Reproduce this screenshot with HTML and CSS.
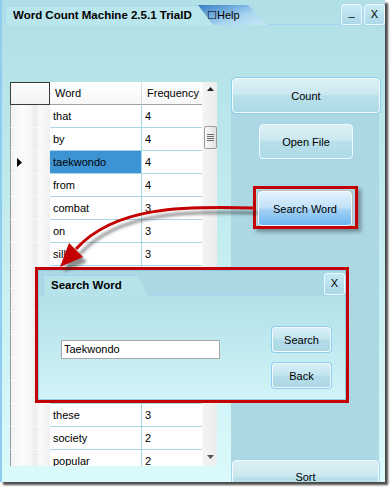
FILE: index.html
```html
<!DOCTYPE html>
<html>
<head>
<meta charset="utf-8">
<link rel="stylesheet" href="styles.css">
</head>
<body>
<div class="window">
  <div class="titlebar">
    <div class="tab-title"><span class="title-text">Word Count Machine 2.5.1 TrialD</span></div>
    <div class="tab-help">&#9744;Help</div>
    <div class="title-line"></div>
    <div class="win-btns">
      <div class="wbtn min">_</div>
      <div class="wbtn">X</div>
    </div>
  </div>
  <div class="main">
    <div class="grid">
      <div class="table">
        <div class="row head"><div class="rh corner"></div><div class="c w">Word</div><div class="c f">Frequency</div></div>
        <div class="row"><div class="rh"></div><div class="c w">that</div><div class="c f">4</div></div>
        <div class="row"><div class="rh"></div><div class="c w">by</div><div class="c f">4</div></div>
        <div class="row"><div class="rh"><svg class="ind" width="5" height="9" viewBox="0 0 5 9"><path d="M0 0 L5 4.5 L0 9 Z" fill="#000"/></svg></div><div class="c w sel">taekwondo</div><div class="c f">4</div></div>
        <div class="row"><div class="rh"></div><div class="c w">from</div><div class="c f">4</div></div>
        <div class="row"><div class="rh"></div><div class="c w">combat</div><div class="c f">3</div></div>
        <div class="row"><div class="rh"></div><div class="c w">on</div><div class="c f">3</div></div>
        <div class="row"><div class="rh"></div><div class="c w">silla</div><div class="c f">3</div></div>
        <div class="row"><div class="rh"></div><div class="c w"></div><div class="c f"></div></div>
        <div class="row"><div class="rh"></div><div class="c w"></div><div class="c f"></div></div>
        <div class="row"><div class="rh"></div><div class="c w"></div><div class="c f"></div></div>
        <div class="row"><div class="rh"></div><div class="c w"></div><div class="c f"></div></div>
        <div class="row"><div class="rh"></div><div class="c w"></div><div class="c f"></div></div>
        <div class="row"><div class="rh"></div><div class="c w"></div><div class="c f"></div></div>
        <div class="row"><div class="rh"></div><div class="c w">these</div><div class="c f">3</div></div>
        <div class="row"><div class="rh"></div><div class="c w">society</div><div class="c f">2</div></div>
        <div class="row"><div class="rh"></div><div class="c w">popular</div><div class="c f">2</div></div>
      </div>
      <div class="vscroll">
        <svg class="sarrow" width="7" height="4" viewBox="0 0 7 4"><path d="M0 4 L3.5 0 L7 4 Z" fill="#222"/></svg>
        <div class="thumb"><i></i><i></i><i></i><i></i></div>
        <svg class="sarrow down" width="7" height="4" viewBox="0 0 7 4"><path d="M0 0 L3.5 4 L7 0 Z" fill="#555"/></svg>
      </div>
    </div>
    <div class="panel">
      <div class="btn count">Count</div>
      <div class="btn open">Open File</div>
      <div class="btn search-word">Search Word</div>
      <div class="btn sort">Sort</div>
    </div>
  </div>
</div>

<div class="dialog">
  <div class="dlg-inner">
    <div class="dlg-bar">
      <div class="dlg-tab">Search Word</div>
      <div class="dlg-line"></div>
      <div class="dlg-x">X</div>
    </div>
    <div class="dlg-body">
      <div class="input">Taekwondo</div>
      <div class="dlg-btns">
        <div class="dbtn">Search</div>
        <div class="dbtn">Back</div>
      </div>
    </div>
  </div>
</div>

<svg class="arrow" width="391" height="487" viewBox="0 0 391 487">
  <defs>
    <filter id="blur" x="-20%" y="-20%" width="140%" height="140%">
      <feGaussianBlur stdDeviation="1.6"/>
    </filter>
  </defs>
  <g transform="translate(4,5)" filter="url(#blur)" opacity="0.55">
    <path d="M253 208 C 185 206, 115 206, 76 249" fill="none" stroke="#333" stroke-width="3"/>
    <path d="M60 267 L69 243 L83 257 Z" fill="#333"/>
  </g>
  <path d="M253 208 C 185 206, 115 206, 76 249" fill="none" stroke="#c40000" stroke-width="3"/>
  <path d="M60 267 L69 243 L83 257 Z" fill="#c40000"/>
</svg>
</body>
</html>
```
FILE: styles.css
```css
* { box-sizing: border-box; margin: 0; padding: 0; }
html, body { width: 391px; height: 487px; background: #fff; overflow: hidden; }
body { font-family: "Liberation Sans", Arial, sans-serif; font-size: 11px; color: #000; position: relative; }

.window {
  width: 385px; height: 482px; overflow: hidden;
  display: flex; flex-direction: column;
  background: linear-gradient(#b0e0e6 0%, #b3e3e8 12%, #c6eef1 55%, #dafafb 100%);
  border-left: 2px solid #8ecdf0;
  box-shadow: 3px 3px 2px #4a4a4a;
}

/* title bar */
.titlebar { height: 25px; flex: 0 0 25px; display: flex; align-items: flex-end; padding-left: 3px; }
.tab-title {
  width: 208px; height: 20px; flex: 0 0 208px;
  background: #b9e6ec;
  border-top: 1px solid #a2d6ee; border-left: 1px solid #a2d6ee;
  padding-left: 7px; line-height: 18px;
  clip-path: polygon(0 0, 193px 0, 208px 100%, 0 100%);
}
.title-text { display: block; width: 183px; overflow: hidden; white-space: nowrap; font-weight: bold; font-size: 11.5px; }
.tab-help {
  position: relative; z-index: 1;
  margin-left: -15px; width: 69px; height: 20px; flex: 0 0 69px;
  background: linear-gradient(160deg, #3b7dc2 0%, #6aa8da 30%, #a9d5f0 60%, #c6e8f7 100%);
  clip-path: polygon(0 0, 50px 0, 69px 100%, 15px 100%);
  padding-left: 9px; line-height: 20px; font-size: 11px;
}
.title-line { width: 73px; height: 20px; border-bottom: 1px solid #9fd5ef; }
.win-btns { margin-left: auto; align-self: flex-start; margin-top: 4px; display: flex; gap: 2px; }
.wbtn {
  width: 21px; height: 21px; border-radius: 3px;
  border: 1.5px solid #f0fbff; box-shadow: 0 0 0 1px #a8d8ee;
  background: linear-gradient(#c9ecf4, #acd8e8);
  text-align: center; line-height: 18px; font-size: 11px;
}
.wbtn.min { line-height: 14px; }

/* main */
.main { flex: 1; display: flex; padding-left: 8px; }
.grid { margin-top: 57px; width: 207px; height: 384px; flex: 0 0 207px; display: flex; overflow: hidden; }
.table { width: 192px; flex: 0 0 192px; background: #fff; }
.row { display: grid; grid-template-columns: 40px 92px 60px; height: 23px; }
.rh {
  border-left: 1px solid #9a9a9a; border-bottom: 1px solid #fafafa;
  background: linear-gradient(to right, #f3f3f3 0%, #fbfbfb 25%, #f6f6f6 50%, #ececec 62%, #fafafa 75%, #f0f0f0 100%);
  display: flex; align-items: center; padding-left: 6px;
}
.ind { display: block; }
.c { border-bottom: 1px solid #a8d8e6; padding-left: 3px; line-height: 22px; white-space: nowrap; overflow: hidden; background: #fff; }
.c.w { border-right: 1px solid #a8d8e6; }
.c.sel { background: #3e93d4; }
.row.head .c { border-bottom: 1px solid #a0a0a0; padding-left: 5px; background: linear-gradient(#ffffff, #f7f7f7); }
.row.head .c.w { border-right: 1px solid #dcdcdc; }
.row.head .corner { border: 1px solid #3c3c3c; background: linear-gradient(#fdfdfd, #f1f1f1); }

.vscroll {
  width: 15px; flex: 0 0 15px; height: 384px;
  background: linear-gradient(to right, #f4f4f4, #ececec);
  border-left: 1px solid #f8f8f8;
  display: flex; flex-direction: column; align-items: center;
}
.sarrow { display: block; margin-top: 5px; }
.sarrow.down { margin-top: auto; margin-bottom: 7px; }
.thumb {
  margin-top: 35px; width: 13px; height: 23px;
  border: 1px solid #9c9c9c; border-radius: 2px;
  background: linear-gradient(to right, #fafafa, #e2e2e2);
  display: flex; flex-direction: column; align-items: center; justify-content: center; gap: 1px;
}
.thumb i { display: block; width: 7px; height: 1px; background: #6c6c6c; }

/* right panel */
.panel {
  margin-left: 14px; margin-top: 53px; width: 148px; flex: 0 0 148px; height: 417px;
  background: #acd8e4; display: flex; flex-direction: column;
}
.btn {
  height: 35px; border-radius: 4px;
  border: 1px solid #f2fbff; box-shadow: 0 0 0 1px #a6d6ec;
  background: linear-gradient(#dcf0f5 0%, #cbe8f0 45%, #b8e0ea 52%, #addae5 100%);
  display: flex; align-items: center; justify-content: center; font-size: 11px;
}
.btn.count { margin-left: 1px; margin-right: -1px; box-shadow: 0 0 0 1px #8ccdf0; }
.btn.open { margin-top: 11px; margin-left: 28px; width: 94px; }
.btn.search-word {
  position: relative; margin-top: 32px; margin-left: 27px; width: 94px;
  background: linear-gradient(#e2f2fc 0%, #c4e2f8 45%, #a2d0f4 55%, #6cb6f0 100%);
  box-shadow: 0 0 0 1px #bcbcbc;
}
.btn.search-word::after {
  content: ""; position: absolute; left: -6px; right: -7px; top: -6px; bottom: -4px;
  border: 3px solid #c40000;
  box-shadow: 3px 3px 4px rgba(0,0,0,0.35);
}
.btn.sort { margin-top: auto; margin-left: 1px; width: 147px; align-items: flex-start; padding-top: 10px; }

/* dialog */
.dialog {
  position: absolute; left: 35px; top: 267px; width: 314px; height: 136px;
  border: 3px solid #c40000;
}
.dlg-inner {
  height: 100%; border: 1px solid #8ccbe6; display: flex; flex-direction: column;
  background: linear-gradient(#b0e0e6 0%, #b2e2e8 25%, #d2f4f8 100%);
}
.dlg-bar { height: 25px; flex: 0 0 25px; background: #acd8e4; display: flex; align-items: flex-end; }
.dlg-tab {
  margin-left: 4px; width: 105px; height: 21px;
  background: #b6e3e9;
  border-top: 1px solid #9ad4ee; border-left: 1px solid #9ad4ee;
  clip-path: polygon(0 0, 94px 0, 105px 100%, 0 100%);
  padding-left: 7px; line-height: 19px; font-weight: bold; font-size: 11.5px;
}
.dlg-line { width: 134px; height: 21px; border-bottom: 1px solid #a4daf0; }
.dlg-x {
  margin-left: auto; align-self: flex-start; margin-top: 2px;
  width: 21px; height: 22px; border-radius: 3px;
  border: 1.5px solid #f0fbff; box-shadow: 0 0 0 1px #a8d8ee;
  background: linear-gradient(#c4eaf2, #acd8e6);
  text-align: center; line-height: 19px; font-size: 11px;
}
.dlg-body { flex: 1; display: flex; padding: 31px 14px 0 22px; }
.input {
  margin-top: 13px; width: 159px; height: 19px;
  border: 1px solid #a8a8a8; background: #fff;
  padding-left: 2px; line-height: 17px; font-size: 11px;
}
.dlg-btns { margin-left: auto; display: flex; flex-direction: column; gap: 11px; }
.dbtn {
  width: 59px; height: 25px; border-radius: 3px;
  border: 1px solid #f2fbff; box-shadow: 0 0 0 1px #8fcdf0;
  background: linear-gradient(#d8eff5 0%, #c4e6ef 45%, #b2dce8 55%, #acd8e4 100%);
  display: flex; align-items: center; justify-content: center; font-size: 11px;
}

.arrow { position: absolute; left: 0; top: 0; pointer-events: none; }
```
